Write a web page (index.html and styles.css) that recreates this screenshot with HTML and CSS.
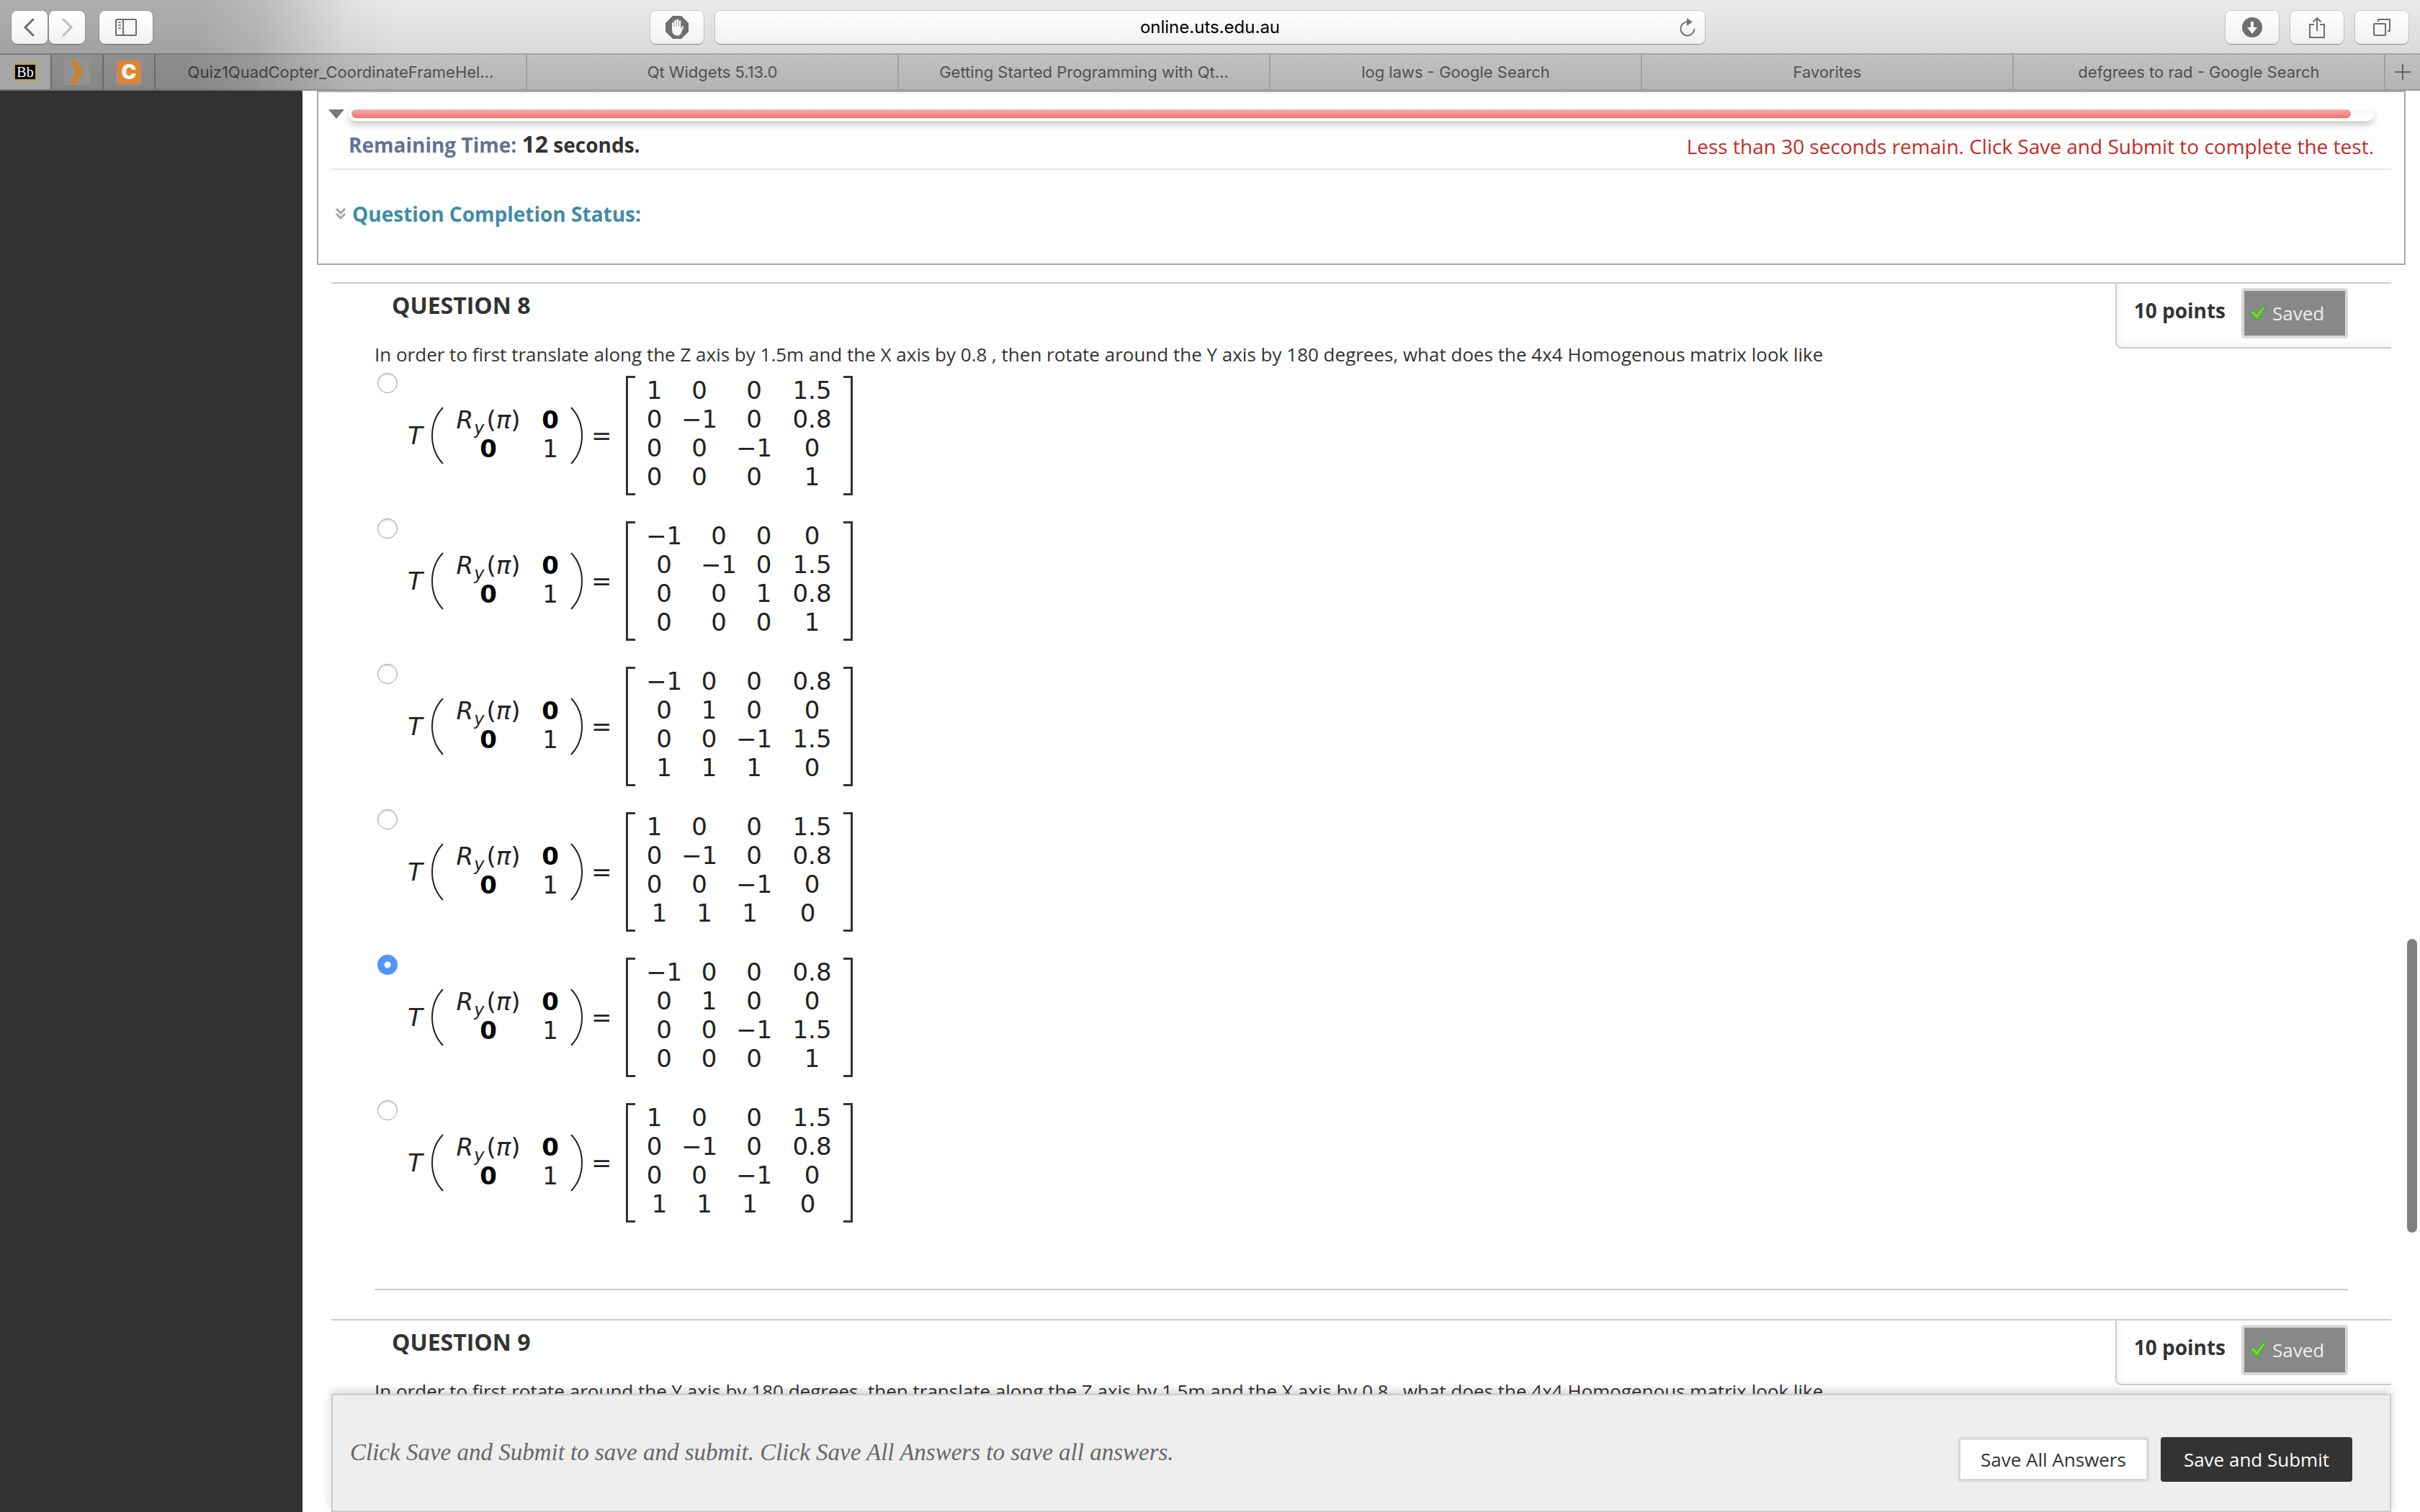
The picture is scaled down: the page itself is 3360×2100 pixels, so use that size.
FILE: index.html
```html
<!DOCTYPE html>
<html lang="en">
<head>
<meta charset="utf-8">
<title>Take Test: Quiz 1</title>
<link rel="stylesheet" href="styles.css">
</head>
<body>
<header class="browser">
  <div class="toolbar">
    <div class="tools">
      <div class="history">
        <button class="tool tool-nav" aria-label="Back"><svg width="20" height="28" viewBox="0 0 20 28"><path d="M15 3 4 14l11 11" fill="none" stroke="#6e6e6e" stroke-width="3" stroke-linecap="round"/></svg></button>
        <button class="tool tool-nav" aria-label="Forward"><svg width="20" height="28" viewBox="0 0 20 28"><path d="M5 3l11 11L5 25" fill="none" stroke="#bcbcbc" stroke-width="3" stroke-linecap="round"/></svg></button>
      </div>
      <button class="tool" aria-label="Show sidebar"><svg width="30" height="24" viewBox="0 0 30 24"><rect x="1" y="1" width="28" height="22" rx="1" fill="none" stroke="#6e6e6e" stroke-width="2"/><path d="M11 1v22" stroke="#6e6e6e" stroke-width="2"/><path d="M4 5h4M4 9h4M4 13h4" stroke="#8e8e8e" stroke-width="2"/></svg></button>
      <button class="tool push" aria-label="Content blocker"><svg width="32" height="32" viewBox="0 0 32 32"><path d="M10 0h12l10 10v12L22 32H10L0 22V10z" fill="#6f6f6f"/><path d="M9 19V10q0-1.300 1.200-1.300T11.500 10v5h.7V7q0-1.300 1.300-1.300T14.800 7v7.500h.7V5.800q0-1.300 1.300-1.300t1.300 1.300V15h.7V7.500q0-1.300 1.200-1.300t1.200 1.300V18l1.500-3q.8-1.300 1.800-.8.800.4.400 1.700L22 23q-1.500 4.500-5.500 4.500-7 0-7.500-8.500z" fill="#fafafa"/></svg></button>
    </div>
    <div class="address">
      <input class="url" type="text" value="online.uts.edu.au" aria-label="Address">
      <button class="reload" aria-label="Reload"><svg width="24" height="28" viewBox="0 0 24 28"><path d="M12 6.500A9.500 9.500 0 1 0 21.500 16" fill="none" stroke="#737373" stroke-width="2"/><path d="M11 1l8 5.500-8 5.500z" fill="#737373"/></svg></button>
    </div>
    <div class="tools tools-end">
      <button class="tool" aria-label="Downloads"><svg width="28" height="28" viewBox="0 0 28 28"><circle cx="14" cy="14" r="14" fill="#6f6f6f"/><path d="M12 6h4v8h5l-7 9-7-9h5z" fill="#fff"/></svg></button>
      <button class="tool" aria-label="Share"><svg width="24" height="32" viewBox="0 0 24 32"><path d="M8 12H2v18h20V12h-6M12 21V3M6.500 8.500 12 3l5.500 5.500" fill="none" stroke="#6f6f6f" stroke-width="2"/></svg></button>
      <button class="tool" aria-label="Show all tabs"><svg width="26" height="26" viewBox="0 0 26 26"><rect x="2" y="8" width="16" height="16" rx="1" fill="none" stroke="#6f6f6f" stroke-width="2"/><path d="M8 5V2h16v16h-3" fill="none" stroke="#6f6f6f" stroke-width="2"/></svg></button>
    </div>
  </div>
  <nav class="tabs" aria-label="Tabs">
    <a class="pin pin-current" href="#" aria-label="Blackboard"><span class="icon-bb">Bb</span></a>
    <a class="pin" href="#" aria-label="Pinned site"><span class="icon-box"><svg width="20" height="32" viewBox="0 0 20 32"><path d="M0 0h9l10 16L9 32H0l8-16z" fill="#c9812f"/></svg></span></a>
    <a class="pin" href="#" aria-label="Pinned site"><span class="icon-box"><span class="icon-c">C</span></span></a>
    <a class="tab" href="#">Quiz1QuadCopter_CoordinateFrameHel...</a>
    <a class="tab" href="#">Qt Widgets 5.13.0</a>
    <a class="tab" href="#">Getting Started Programming with Qt...</a>
    <a class="tab" href="#">log laws - Google Search</a>
    <a class="tab" href="#">Favorites</a>
    <a class="tab" href="#">defgrees to rad - Google Search</a>
    <button class="new-tab" aria-label="New tab"><svg width="22" height="22" viewBox="0 0 22 22"><path d="M11 0v22M0 11h22" stroke="#626262" stroke-width="2"/></svg></button>
  </nav>
</header>

<div class="page">
  <aside class="side"></aside>
  <main class="content">
    <section class="status">
      <div class="timer">
        <button aria-label="Collapse timer"><svg width="22" height="14" viewBox="0 0 22 14"><path d="M0 1h22L11 14z" fill="#777"/></svg></button>
        <div class="track"><div class="fill" style="width:99%"></div></div>
      </div>
      <div class="timing">
        <p class="remaining">Remaining Time: <span class="left"><span class="count">12</span> seconds.</span></p>
        <p class="warning">Less than 30 seconds remain. Click Save and Submit to complete the test.</p>
      </div>
      <button class="completion"><svg width="14" height="18" viewBox="0 0 14 18"><path d="M1 2l6 6 6-6M1 9l6 6 6-6" fill="none" stroke="#a2a2a2" stroke-width="3"/></svg>Question Completion Status:</button>
    </section>

    <section class="question">
      <div class="question-top">
        <div class="question-body">
          <h2>QUESTION 8</h2>
          <p id="q8">In order to first translate along the Z axis by 1.5m and the X axis by 0.8 , then rotate around the Y axis by 180 degrees, what does the 4x4 Homogenous matrix look like</p>
          <ul class="options" role="radiogroup" aria-labelledby="q8"></ul>
        </div>
        <div class="points"><span class="score">10 points</span><button class="saved"><svg width="26" height="24" viewBox="0 0 26 24"><path d="M2 11l5-3 4 6L20 2l4 1-11 18h-3z" fill="#5fce2a" stroke="#3f9a1c" stroke-width="1"/><path d="M4 11l3-1 4 6L20 4" fill="none" stroke="#a9ee80" stroke-width="1"/></svg>Saved</button></div>
      </div>
      <hr>
    </section>

    <section class="question">
      <div class="question-top">
        <div class="question-body">
          <h2>QUESTION 9</h2>
          <p>In order to first rotate around the Y axis by 180 degrees, then translate along the Z axis by 1.5m and the X axis by 0.8 , what does the 4x4 Homogenous matrix look like</p>
        </div>
        <div class="points"><span class="score">10 points</span><button class="saved"><svg width="26" height="24" viewBox="0 0 26 24"><path d="M2 11l5-3 4 6L20 2l4 1-11 18h-3z" fill="#5fce2a" stroke="#3f9a1c" stroke-width="1"/><path d="M4 11l3-1 4 6L20 4" fill="none" stroke="#a9ee80" stroke-width="1"/></svg>Saved</button></div>
      </div>
    </section>

    <footer class="actions">
      <p>Click Save and Submit to save and submit. Click Save All Answers to save all answers.</p>
      <button class="btn">Save All Answers</button>
      <button class="btn btn-main">Save and Submit</button>
    </footer>
    <div class="scrollbar"></div>
  </main>
</div>
<script src="options.js"></script>
</body>
</html>
```
FILE: options.js
```js
// Each answer: column layout class, matrix rows, and whether it is selected.
const answers = [
  { cols: 'narrow-1', rows: ['1 0 0 1.5', '0 −1 0 0.8', '0 0 −1 0', '0 0 0 1'] },
  { cols: 'narrow-3', rows: ['−1 0 0 0', '0 −1 0 1.5', '0 0 1 0.8', '0 0 0 1'] },
  { cols: 'narrow-2', rows: ['−1 0 0 0.8', '0 1 0 0', '0 0 −1 1.5', '1 1 1 0'] },
  { cols: 'narrow-1 uneven', rows: ['1 0 0 1.5', '0 −1 0 0.8', '0 0 −1 0', '1 1 1 0'] },
  { cols: 'narrow-2', rows: ['−1 0 0 0.8', '0 1 0 0', '0 0 −1 1.5', '0 0 0 1'], checked: true },
  { cols: 'narrow-1 uneven', rows: ['1 0 0 1.5', '0 −1 0 0.8', '0 0 −1 0', '1 1 1 0'] }
];

const paren = (d, cls) =>
  `<svg class="${cls}" width="17" height="80" viewBox="0 0 17 80"><path d="${d}" fill="none" stroke="#222" stroke-width="2"/></svg>`;

const row = text => `<tr>${text.split(' ').map(v => `<td>${v}</td>`).join('')}</tr>`;

document.querySelector('.options').innerHTML = answers.map((a, i) => `
  <li class="option">
    <input type="radio" name="q8" id="q8-${i}"${a.checked ? ' checked' : ''}>
    <label class="math" for="q8-${i}">
      <i class="fn">T</i>
      ${paren('M16 1C-4 22-4 58 16 79', 'open')}
      <table class="block">
        <tr><td><i>R</i><sub>y</sub>(<i>π</i>)</td><td><b>0</b></td></tr>
        <tr><td><b>0</b></td><td>1</td></tr>
      </table>
      ${paren('M1 1C21 22 21 58 1 79', 'close')}
      <span class="equals">=</span>
      <span class="bracket bracket-left"></span>
      <table class="matrix ${a.cols}">${a.rows.map(row).join('')}</table>
      <span class="bracket bracket-right"></span>
    </label>
  </li>`).join('');
```
FILE: styles.css
```css
* { box-sizing: border-box; }
body {
  margin: 0;
  height: 100vh;
  display: flex;
  flex-direction: column;
  overflow: hidden;
  background: #fff;
  color: #333;
  font: 26px/36px "Open Sans", sans-serif;
}
p, h2, ul { margin: 0; padding: 0; }
ul { list-style: none; }
button { font: inherit; color: inherit; border: 0; background: none; padding: 0; }
svg { display: block; flex: none; }

/* Browser window */
.browser { position: relative; flex: none; font-family: Inter, sans-serif; }
.browser::after {
  content: "";
  position: absolute;
  inset: 0;
  background: linear-gradient(100deg, rgba(0,0,0,.26) 280px, rgba(0,0,0,.2) 360px, rgba(0,0,0,.04) 480px, rgba(0,0,0,0) 560px);
  pointer-events: none;
}
.toolbar {
  display: grid;
  grid-template-columns: 1fr minmax(0, 1374px) 1fr;
  gap: 16px;
  padding: 15px 16px 13px;
  background: linear-gradient(#ebebeb, #dadada);
  border-bottom: 2px solid #a3a3a3;
}
.tools { display: flex; gap: 20px; position: relative; z-index: 1; }
.tools-end { justify-content: flex-end; gap: 16px; }
.history { display: flex; gap: 2px; }
.push { margin-left: auto; }
.tool, .address {
  display: flex;
  align-items: center;
  justify-content: center;
  height: 46px;
  border-radius: 8px;
  background: linear-gradient(#fff, #f1f1f1);
  box-shadow: 0 0 0 1px rgba(0,0,0,.12), 0 1px 1px rgba(0,0,0,.3);
}
.tool { width: 74px; }
.tool-nav { width: 50px; }
.address { padding: 0 12px 0 36px; }
.url {
  flex: 1;
  min-width: 0;
  border: 0;
  background: none;
  padding: 0;
  font: 24px/30px Inter, sans-serif;
  text-align: center;
  color: #000;
}
.tabs {
  display: flex;
  height: 50px;
  background: linear-gradient(#c1c1c1, #b4b4b4);
  border-bottom: 2px solid #9c9c9c;
}
.pin, .tab, .new-tab { display: flex; align-items: center; justify-content: center; }
.pin { width: 72px; border-right: 2px solid #8e8e8e; text-decoration: none; }
.pin-current { background: #dedede; }
.tab {
  flex: 1;
  min-width: 0;
  border-right: 2px solid #a0a0a0;
  color: #505050;
  font-size: 22px;
  line-height: 28px;
  white-space: nowrap;
  text-decoration: none;
}
.new-tab { width: 48px; }
.icon-bb, .icon-box { position: relative; z-index: 1; }
.icon-bb {
  width: 32px;
  height: 24px;
  border: 2px solid #c9a43c;
  border-radius: 2px;
  background: #000;
  color: #fff;
  font: 20px/20px "Liberation Serif", serif;
  text-align: center;
}
.icon-box {
  display: flex;
  align-items: center;
  justify-content: center;
  width: 36px;
  height: 36px;
  background: #929292;
}
.icon-c {
  width: 32px;
  height: 32px;
  border-radius: 5px;
  background: #e5822e;
  color: #fff;
  font: 900 28px/32px Inter, sans-serif;
  text-align: center;
}

/* Page */
.page { flex: 1; min-height: 0; display: flex; position: relative; }
.side { width: 12.5%; background: #323232; }
.content { flex: 1; min-width: 0; padding: 0 20px; overflow: hidden; }

.status {
  border: 2px solid #a9a9a9;
  padding: 20px 18px 50px;
  font-size: 28px;
  line-height: 38px;
}
.timer { display: flex; align-items: center; gap: 6px; padding-right: 24px; margin-left: -4px; }
.track {
  flex: 1;
  height: 20px;
  padding: 4px;
  border-radius: 10px;
  background: linear-gradient(#fff 4px, #f6f6f6 4px, #fff 14px);
  box-shadow: 0 6px 10px rgba(0,0,0,.2);
}
.fill { height: 12px; border-radius: 6px; background: linear-gradient(#f5adab, #ee716d); }
.timing {
  display: flex;
  justify-content: space-between;
  height: 68px;
  padding: 13px 24px 0;
  border-bottom: 2px solid #e6e6e6;
}
.remaining { font-weight: 700; color: #5f7397; }
.left { color: #333; }
.count { font-size: 32px; }
.warning { color: #c12d26; line-height: 44px; }
.completion {
  display: flex;
  align-items: center;
  gap: 9px;
  margin: 42px 0 0 6px;
  font-weight: 700;
  color: #3f8ca4;
}

.question { margin: 24px 20px 0; }
.question + .question { margin-top: 40px; }
.question-top { display: flex; align-items: flex-start; border-top: 2px solid #ccc; }
.question-body { flex: 1; min-width: 0; padding: 8px 0 0 60px; }
h2 { margin: 0 0 28px; padding-left: 24px; font-size: 32px; line-height: 44px; }
hr { margin: 60px 60px 0; border: 0; border-top: 2px solid #ccc; }
.points {
  display: flex;
  align-items: flex-start;
  gap: 22px;
  padding: 6px 60px 12px 24px;
  border: solid #ccc;
  border-width: 0 0 2px 2px;
  border-bottom-left-radius: 8px;
  box-shadow: inset 4px -4px 8px rgba(0,0,0,.04);
}
.score { font-size: 28px; line-height: 62px; font-weight: 700; }
.saved {
  display: flex;
  align-items: center;
  gap: 7px;
  width: 148px;
  height: 70px;
  padding-left: 6px;
  border: 4px solid #d9d9d9;
  border-radius: 4px;
  background: #888;
  color: #eee;
}

/* Answers */
.options { padding-top: 8px; }
.option { display: flex; align-items: flex-start; height: 202px; padding-left: 4px; }
.option input {
  appearance: none;
  flex: none;
  width: 28px;
  height: 28px;
  margin: 0 14px 0 0;
  border: 1px solid #9c9c9c;
  border-radius: 50%;
  background: #fff;
  box-shadow: inset 0 2px 2px rgba(0,0,0,.12);
}
.option input:checked {
  border: 0;
  background: radial-gradient(circle, #fff 4px, #5297f7 5px);
  box-shadow: none;
}
.math {
  display: flex;
  align-items: center;
  height: 166px;
  margin-top: 4px;
  color: #222;
  font: 34px/40px "DejaVu Sans", sans-serif;
}
.fn { width: 33px; }
.math table { border-collapse: collapse; table-layout: fixed; }
.math td { height: 40px; padding: 0; text-align: center; white-space: nowrap; }
.block { width: 172px; margin-bottom: 4px; }
.block td:first-child { width: 124px; }
.block b { color: #000; }
.block sub { font-size: 24px; line-height: 0; font-style: italic; vertical-align: -8px; margin: 0 3px 0 1px; }
.close { margin-left: 4px; }
.equals { width: 28px; margin: 0 20px 0 12px; }
.bracket { width: 13px; height: 166px; border: 3px solid #333; }
.bracket-left { border-right: 0; }
.bracket-right { border-left: 0; }
.matrix { width: 286px; margin: 0 1px 6px 2px; }
.matrix td { width: 76px; }
.matrix td:last-child { width: 85px; }
.narrow-1 td:nth-child(1),
.narrow-2 td:nth-child(2),
.narrow-3 td:nth-child(3) { width: 49px; }
.uneven tr:last-child td { padding-left: 14px; }
.uneven tr:last-child td:nth-child(n+3) { padding: 0 12px 0 0; }

/* Save bar, laid over the scrolled questions */
.actions {
  position: absolute;
  left: calc(12.5% + 40px);
  right: 40px;
  bottom: 0;
  height: 164px;
  display: flex;
  align-items: flex-start;
  gap: 16px;
  padding: 58px 52px 0 24px;
  border: 2px solid #ccc;
  background: #eee;
  box-shadow: 0 -4px 12px rgba(0,0,0,.18);
}
.actions p {
  flex: 1;
  color: #666;
  font: italic 33px/42px "Liberation Serif", serif;
}
.btn {
  height: 62px;
  padding: 0 28px;
  border: 4px solid #dadada;
  border-radius: 4px;
  background: #fff;
}
.btn-main { border-color: #333; background: #333; color: #fff; }
.scrollbar {
  position: absolute;
  top: 1178px;
  right: 4px;
  width: 14px;
  height: 408px;
  border-radius: 7px;
  background: #808080;
}
```
